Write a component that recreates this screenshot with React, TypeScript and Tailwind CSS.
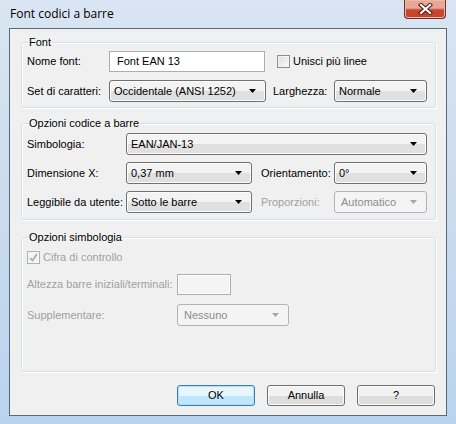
import type { ReactNode } from "react";

function Arrow({ disabled }: { disabled?: boolean }) {
  return (
    <svg width="7" height="4" viewBox="0 0 7 4" className="shrink-0">
      <polygon points="0,0 7,0 3.5,4" fill={disabled ? "#a5a5a5" : "#000"} />
    </svg>
  );
}

function Combo({
  value,
  className,
  disabled,
}: {
  value: string;
  className: string;
  disabled?: boolean;
}) {
  return (
    <div
      className={
        disabled
          ? `flex h-[22px] items-center justify-between rounded-[3px] border border-[#b5b2b5] bg-[#f4f4f4] pl-[6px] pr-[9px] text-[#8d8d8d] ${className}`
          : `flex h-[22px] items-center justify-between rounded-[3px] border border-[#707070] bg-gradient-to-b from-[#f3f3f3] from-50% to-[#e0e0e0] to-50% pl-[3px] pr-[9px] text-black shadow-[inset_0_0_0_1px_#fcfcfc] ${className}`
      }
    >
      <span className={disabled ? "" : "px-[1px]"}>{value}</span>
      <Arrow disabled={disabled} />
    </div>
  );
}

function Group({
  title,
  className,
  children,
}: {
  title: string;
  className: string;
  children: ReactNode;
}) {
  return (
    <fieldset
      className={`rounded-[3px] border border-[#d5dfe5] px-[5px] shadow-[inset_1px_1px_0_#fff,1px_1px_0_#fff] ${className}`}
    >
      <legend className="ml-[1px] px-[1px] leading-[13px] text-black">{title}</legend>
      {children}
    </fieldset>
  );
}

function Button({ label, focused }: { label: string; focused?: boolean }) {
  return (
    <div
      className={
        focused
          ? "flex h-[21px] w-[78px] items-center justify-center rounded-[3px] border border-[#3c7fb1] bg-gradient-to-b from-[#eaf6fd] from-50% to-[#bee6fd] to-50% shadow-[inset_0_0_0_1px_#aee2f7]"
          : "flex h-[21px] w-[78px] items-center justify-center rounded-[3px] border border-[#707070] bg-gradient-to-b from-[#f2f2f2] from-50% to-[#dddddd] to-50% shadow-[inset_0_0_0_1px_#fcfcfc]"
      }
    >
      {label}
    </div>
  );
}

export default function App() {
  return (
    <div className="flex h-[424px] w-[456px] flex-col bg-gradient-to-b from-[#d9e5f2] via-[#cadbed] to-[#b9d3ee] px-[9px] pb-[8px] font-['Liberation_Sans',Arial,sans-serif] text-[11px] text-black">
      {/* title bar */}
      <div className="flex h-[28px] shrink-0 items-start justify-between">
        <span className="mt-[6px] pl-[1px] font-['Open_Sans','Noto_Sans',sans-serif] text-[12px] leading-[16px]">
          Font codici a barre
        </span>
        <div className="mr-[1px] flex h-[19px] w-[42px] items-center justify-center rounded-b-[4px] border border-t-0 border-[#6d2d24] bg-gradient-to-b from-[#e8a796] from-45% to-[#c7452e] to-55% shadow-[inset_0_0_0_1px_#f0b8a8]">
          <svg width="15" height="12" viewBox="0 0 15 12">
            <path d="M3 2 L12 10 M12 2 L3 10" stroke="#4a1a14" strokeWidth="4.2" strokeLinecap="square" />
            <path d="M3 2 L12 10 M12 2 L3 10" stroke="#fff" strokeWidth="2.2" strokeLinecap="square" />
          </svg>
        </div>
      </div>

      {/* client area */}
      <div className="flex flex-1 flex-col border border-[#58697c] bg-[#f0f0f0] pl-[11px] pr-[10px] pt-[7px]">
        <Group title="Font" className="pb-[5px]">
          <div className="mt-[2px] flex h-[21px] items-center">
            <span className="w-[82px]">Nome font:</span>
            <div className="flex h-[21px] w-[156px] items-center border border-[#abadb3] bg-white pl-[7px]">
              Font EAN 13
            </div>
            <div className="ml-[12px] h-[13px] w-[13px] border border-[#8e8f8f] bg-gradient-to-br from-[#dcdcdc] to-[#fbfbfb] shadow-[inset_0_0_0_1px_#f4f4f4]" />
            <span className="ml-[3px]">Unisci più linee</span>
          </div>
          <div className="mt-[8px] flex h-[22px] items-center">
            <span className="w-[82px]">Set di caratteri:</span>
            <Combo value="Occidentale (ANSI 1252)" className="w-[157px]" />
            <span className="ml-[7px] w-[61px]">Larghezza:</span>
            <Combo value="Normale" className="w-[93px]" />
          </div>
        </Group>

        <Group title="Opzioni codice a barre" className="mt-[9px] pb-[6px]">
          <div className="mt-[3px] flex h-[22px] items-center">
            <span className="w-[99px]">Simbologia:</span>
            <Combo value="EAN/JAN-13" className="w-[301px]" />
          </div>
          <div className="mt-[7px] flex h-[22px] items-center">
            <span className="w-[99px]">Dimensione X:</span>
            <Combo value="0,37 mm" className="w-[126px]" />
            <span className="ml-[9px] w-[73px]">Orientamento:</span>
            <Combo value="0°" className="w-[93px]" />
          </div>
          <div className="mt-[7px] flex h-[22px] items-center">
            <span className="w-[99px]">Leggibile da utente:</span>
            <Combo value="Sotto le barre" className="w-[126px]" />
            <span className="ml-[9px] w-[73px] text-[#a0a0a0]">Proporzioni:</span>
            <Combo value="Automatico" className="w-[93px]" disabled />
          </div>
        </Group>

        <Group title="Opzioni simbologia" className="mt-[11px] pb-[45px] text-[#a0a0a0]">
          <div className="mt-[6px] flex h-[14px] items-center">
            <div className="flex h-[13px] w-[13px] items-center justify-center border border-[#b1b1b1] bg-[#f4f4f4]">
              <svg width="9" height="9" viewBox="0 0 9 9">
                <path d="M1 5 L3.5 7.5 L8 1" stroke="#a6a6a6" strokeWidth="1.6" fill="none" />
              </svg>
            </div>
            <span className="ml-[3px]">Cifra di controllo</span>
          </div>
          <div className="mt-[10px] flex h-[21px] items-center">
            <span className="w-[150px]">Altezza barre iniziali/terminali:</span>
            <div className="h-[21px] w-[54px] border border-[#afafaf] bg-[#f4f4f4] shadow-[inset_0_0_0_1px_#fff]" />
          </div>
          <div className="mt-[9px] flex h-[22px] items-center">
            <span className="w-[150px]">Supplementare:</span>
            <Combo value="Nessuno" className="w-[112px]" disabled />
          </div>
        </Group>

        <div className="mt-[13px] flex justify-end gap-[12px] pr-[1px]">
          <Button label="OK" focused />
          <Button label="Annulla" />
          <Button label="?" />
        </div>
      </div>
    </div>
  );
}
